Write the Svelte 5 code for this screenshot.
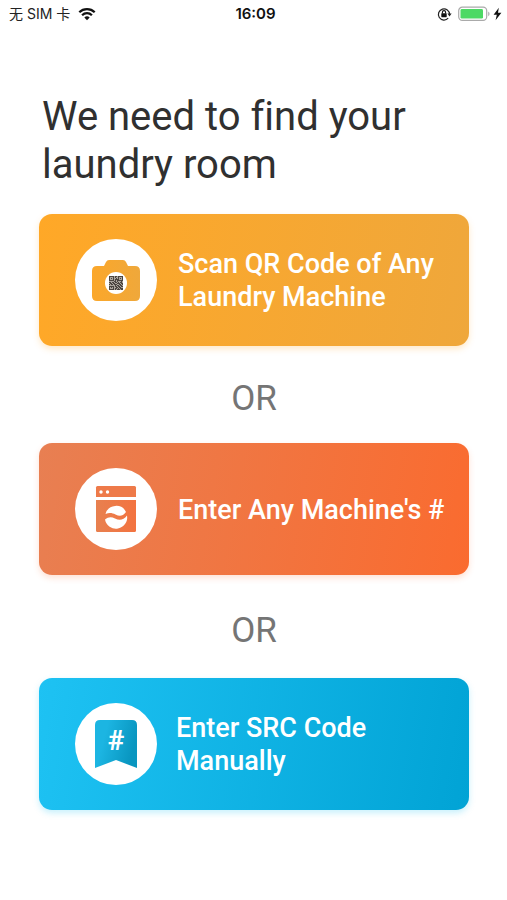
<script>
  // dark modules of the tiny QR code, one string per row
  const qrRows = [
    '11111011011111',
    '10001010010001',
    '10101001010101',
    '10001011110001',
    '11111010111111',
    '00000110100010',
    '11011011010110',
    '01101100111011',
    '10110111001101',
    '00000010110110',
    '11111011011011',
    '10101001101100',
    '10001011010111',
    '11111010111011',
  ];

  const qrModules = qrRows.flatMap((row, y) =>
    [...row].flatMap((cell, x) => (cell === '1' ? [{ x, y }] : []))
  );
</script>

<header class="status-bar">
  <div class="carrier">
    <span>无 SIM 卡</span>
    <svg width="18" height="14" viewBox="0 0 18 14" aria-hidden="true">
      <g fill="none" stroke="#111" stroke-width="2.3">
        <path d="M1.3 5.2a11 11 0 0 1 15.4 0" />
        <path d="M4.1 8.2a7 7 0 0 1 9.8 0" />
      </g>
      <path d="M9 13.2 6.3 10.5a3.9 3.9 0 0 1 5.4 0z" fill="#111" />
    </svg>
  </div>
  <span class="time">16:09</span>
  <div class="indicators">
    <svg width="15" height="14" viewBox="0 0 15 14" aria-hidden="true">
      <path d="M11.2 11.2A5.6 5.6 0 1 1 12.6 7.4" fill="none" stroke="#222" stroke-width="1.2" />
      <path d="M10.4 6.6h4.2l-2.1 2.8z" fill="#222" />
      <rect x="4.3" y="6.2" width="5.4" height="4" rx="0.6" fill="#111" />
      <path d="M5.4 6.5V5.2a1.6 1.6 0 0 1 3.2 0v1.3" fill="none" stroke="#111" stroke-width="1.1" />
    </svg>
    <div class="power">
      <svg width="32" height="16" viewBox="0 0 32 16" aria-hidden="true">
        <rect x="0.7" y="1.2" width="28" height="13.2" rx="3.6" fill="#fff" stroke="#aaa" stroke-width="1.2" />
        <rect x="2.5" y="3" width="22.5" height="9.6" rx="1.4" fill="#4cd964" />
        <path d="M30.2 5.6a2.6 2.6 0 0 1 0 4.6z" fill="#aaa" />
      </svg>
      <svg width="9" height="14" viewBox="0 0 9 14" aria-hidden="true">
        <path d="M5.8 0.8 0.6 7.8h3.2L2.6 13.2 8.4 5.8H5z" fill="#111" />
      </svg>
    </div>
  </div>
</header>

<main class="page">
  <h1>We need to find your laundry room</h1>

  <button class="card scan">
    <span class="badge">
      <svg width="82" height="82" viewBox="0 0 82 82" aria-hidden="true">
        <defs>
          <linearGradient id="scan-fill">
            <stop offset="0" stop-color="#fba72a" />
            <stop offset="1" stop-color="#efa83b" />
          </linearGradient>
        </defs>
        <path
          d="M22 27h7l2-4q1-2 3-2h14q2 0 3 2l2 4h7q5 0 5 5v25q0 5-5 5H22q-5 0-5-5V32q0-5 5-5z"
          fill="url(#scan-fill)"
        />
        <circle cx="41" cy="44" r="11" fill="#fff" />
        <g transform="translate(34 37)">
          <rect width="14" height="14" fill="#aaa49c" />
          {#each qrModules as m}
            <rect x={m.x} y={m.y} width="1" height="1" fill="#4b4540" />
          {/each}
        </g>
      </svg>
    </span>
    <span class="label">Scan QR Code of Any Laundry Machine</span>
  </button>

  <div class="divider">OR</div>

  <button class="card machine">
    <span class="badge">
      <svg width="82" height="82" viewBox="0 0 82 82" aria-hidden="true">
        <defs>
          <linearGradient id="machine-fill">
            <stop offset="0" stop-color="#e8804f" />
            <stop offset="1" stop-color="#f37340" />
          </linearGradient>
        </defs>
        <path d="M21 19.5q0-1.500 1.500-1.500h37q1.500 0 1.500 1.500V29H21z" fill="#ee7a49" />
        <path d="M21 32h40v30.500q0 1.500-1.500 1.500h-37q-1.500 0-1.500-1.500z" fill="url(#machine-fill)" />
        <circle cx="26" cy="24" r="1.7" fill="#fff" />
        <circle cx="32.5" cy="24" r="1.7" fill="#fff" />
        <path d="M30.500 46a11 11 0 0 1 20.500-2c-3.500 4.500-6.500 4.500-10.500 2.500-3.500-1.800-6.500-2-10-.5z" fill="#fff" />
        <path d="M30 51.500c3.500-3 6.500-2.800 10-1 4.500 2.200 8.500 1.700 12-3a11 11 0 0 1-22 4z" fill="#fff" />
      </svg>
    </span>
    <span class="label">Enter Any Machine's #</span>
  </button>

  <div class="divider roomy">OR</div>

  <button class="card src">
    <span class="badge">
      <svg width="82" height="82" viewBox="0 0 82 82" aria-hidden="true">
        <defs>
          <linearGradient id="src-fill" x2="1" y2="0.3">
            <stop offset="0.3" stop-color="#1cb5e2" />
            <stop offset="1" stop-color="#0996c0" />
          </linearGradient>
        </defs>
        <path d="M20 22q0-5 5-5h32q5 0 5 5v43l-21-8-21 8z" fill="url(#src-fill)" />
        <text x="41" y="47" text-anchor="middle">#</text>
      </svg>
    </span>
    <span class="label">Enter SRC Code Manually</span>
  </button>
</main>

<style>
  :global(body) {
    margin: 0;
    background: #fff;
  }

  .status-bar {
    display: grid;
    grid-template-columns: 1fr auto 1fr;
    align-items: center;
    height: 28px;
    padding: 0 5px 0 9px;
    font-family: Inter, "Noto Sans CJK SC", sans-serif;
    font-size: 14px;
    line-height: 28px;
    color: #222;
  }

  .carrier,
  .indicators,
  .power {
    display: flex;
    align-items: center;
    gap: 8px;
  }

  .indicators {
    justify-content: flex-end;
    gap: 6px;
  }

  .power {
    gap: 3px;
  }

  .time {
    font-size: 15px;
    font-weight: 600;
    color: #111;
  }

  .page {
    padding: 65px 38px 40px 39px;
    font-family: Roboto, sans-serif;
  }

  h1 {
    margin: 0 0 25px 3px;
    font-size: 40px;
    font-weight: 450;
    font-variant-ligatures: none;
    line-height: 48px;
    color: #303030;
  }

  .card {
    display: flex;
    align-items: center;
    gap: 21px;
    width: 100%;
    height: 132px;
    padding: 0 20px 0 36px;
    border: none;
    border-radius: 13px;
    font-family: inherit;
    text-align: left;
    color: #fff;
    cursor: pointer;
  }

  .scan {
    background: linear-gradient(100deg, #ffa827, #efa73b);
    box-shadow: 0 3px 6px rgba(255, 168, 39, 0.25);
  }

  .machine {
    background: linear-gradient(100deg, #e87f52, #fa6b2f);
    box-shadow: 0 3px 6px rgba(250, 107, 47, 0.2);
  }

  .src {
    gap: 19px;
    background: linear-gradient(100deg, #1ec2f3, #01a3d5);
    box-shadow: 0 3px 6px rgba(30, 194, 243, 0.25);
  }

  .badge {
    flex: none;
    width: 82px;
    height: 82px;
    border-radius: 50%;
    background: #fff;
  }

  .badge svg {
    display: block;
  }

  .badge text {
    font-size: 28px;
    font-weight: 700;
    fill: #fff;
  }

  .label {
    max-width: 270px;
    padding-top: 2px;
    font-size: 27px;
    font-weight: 500;
    line-height: 33px;
  }

  .src .label {
    max-width: 220px;
  }

  .divider {
    padding: 29px 0 20px;
    font-size: 35px;
    line-height: 48px;
    text-align: center;
    color: #757575;
  }

  .roomy {
    padding: 32px 0 23px;
  }
</style>
